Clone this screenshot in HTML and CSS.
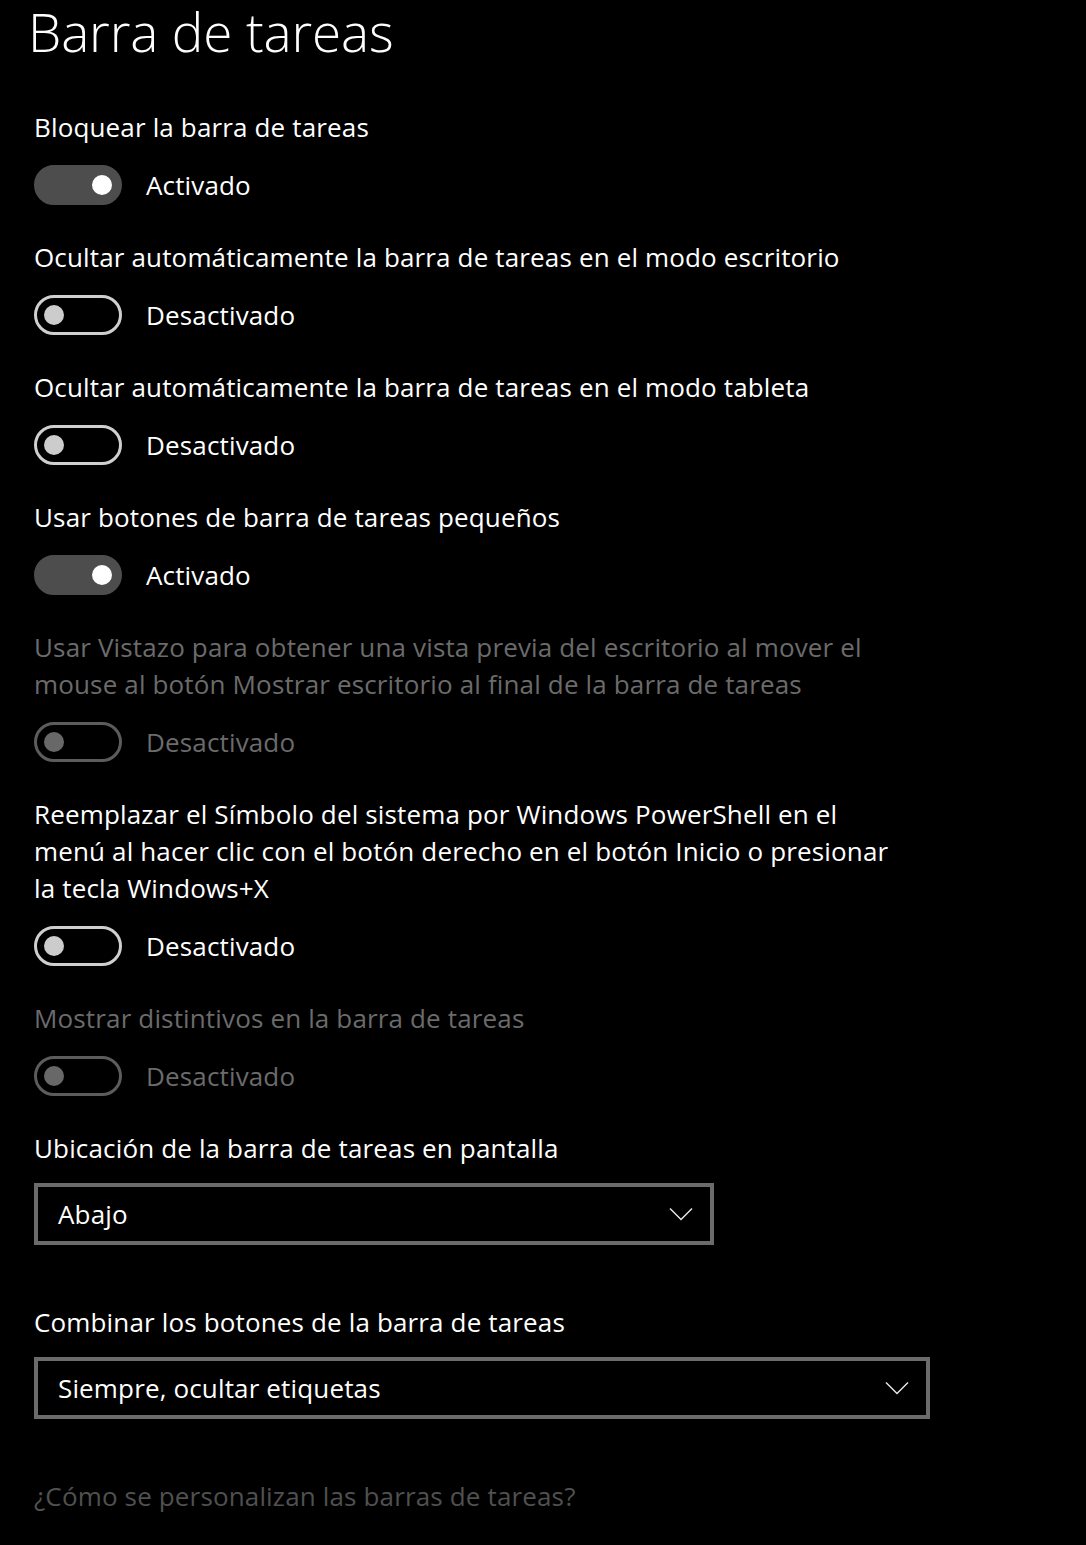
FILE: index.html
```html
<!DOCTYPE html>
<html lang="es">
<head>
<meta charset="utf-8">
<title>Barra de tareas</title>
<link rel="stylesheet" href="styles.css">
</head>
<body>
<main class="page">
  <h1 class="title">Barra de tareas</h1>

  <section class="setting">
    <div class="label">Bloquear la barra de tareas</div>
    <div class="toggle-row">
      <span class="toggle on"><span class="knob"></span></span>
      <span class="state">Activado</span>
    </div>
  </section>

  <section class="setting">
    <div class="label">Ocultar automáticamente la barra de tareas en el modo escritorio</div>
    <div class="toggle-row">
      <span class="toggle"><span class="knob"></span></span>
      <span class="state">Desactivado</span>
    </div>
  </section>

  <section class="setting">
    <div class="label">Ocultar automáticamente la barra de tareas en el modo tableta</div>
    <div class="toggle-row">
      <span class="toggle"><span class="knob"></span></span>
      <span class="state">Desactivado</span>
    </div>
  </section>

  <section class="setting">
    <div class="label">Usar botones de barra de tareas pequeños</div>
    <div class="toggle-row">
      <span class="toggle on"><span class="knob"></span></span>
      <span class="state">Activado</span>
    </div>
  </section>

  <section class="setting disabled">
    <div class="label">Usar Vistazo para obtener una vista previa del escritorio al mover el<br>mouse al botón Mostrar escritorio al final de la barra de tareas</div>
    <div class="toggle-row">
      <span class="toggle"><span class="knob"></span></span>
      <span class="state">Desactivado</span>
    </div>
  </section>

  <section class="setting">
    <div class="label">Reemplazar el Símbolo del sistema por Windows PowerShell en el<br>menú al hacer clic con el botón derecho en el botón Inicio o presionar<br>la tecla Windows+X</div>
    <div class="toggle-row">
      <span class="toggle"><span class="knob"></span></span>
      <span class="state">Desactivado</span>
    </div>
  </section>

  <section class="setting disabled">
    <div class="label">Mostrar distintivos en la barra de tareas</div>
    <div class="toggle-row">
      <span class="toggle"><span class="knob"></span></span>
      <span class="state">Desactivado</span>
    </div>
  </section>

  <section class="setting select-setting">
    <div class="label">Ubicación de la barra de tareas en pantalla</div>
    <div class="select narrow">
      <span class="select-value">Abajo</span>
      <svg class="chevron" width="24" height="14" viewBox="0 0 24 14"><path d="M1 1.5 L12 12.5 L23 1.5" fill="none" stroke="#e6e6e6" stroke-width="1.5"/></svg>
    </div>
  </section>

  <section class="setting select-setting">
    <div class="label">Combinar los botones de la barra de tareas</div>
    <div class="select wide">
      <span class="select-value">Siempre, ocultar etiquetas</span>
      <svg class="chevron" width="24" height="14" viewBox="0 0 24 14"><path d="M1 1.5 L12 12.5 L23 1.5" fill="none" stroke="#e6e6e6" stroke-width="1.5"/></svg>
    </div>
  </section>

  <a class="help-link" href="#">¿Cómo se personalizan las barras de tareas?</a>
</main>
</body>
</html>
```

FILE: styles.css
```css
html, body {
  margin: 0;
  padding: 0;
  background: #000;
}

body {
  font-family: "Open Sans", "Noto Sans", "Liberation Sans", sans-serif;
  color: #fff;
  font-size: 26px;
  letter-spacing: 0.15px;
}

.page {
  display: flex;
  flex-direction: column;
  align-items: flex-start;
  padding-left: 34px;
  width: 1052px;
  min-height: 1545px;
}

.title {
  margin: 0 0 45px -6px;
  font-size: 53px;
  font-weight: 300;
  line-height: 64px;
  letter-spacing: -0.1px;
}

.setting {
  display: flex;
  flex-direction: column;
  align-items: flex-start;
  margin-bottom: 34px;
}

.label {
  line-height: 37px;
  white-space: nowrap;
}

.toggle-row {
  display: flex;
  align-items: center;
  margin-top: 19px;
  height: 40px;
}

.toggle {
  box-sizing: border-box;
  width: 88px;
  height: 40px;
  border-radius: 20px;
  border: 3px solid #cfcfcf;
  display: flex;
  align-items: center;
  padding: 0 7px;
}

.knob {
  width: 20px;
  height: 20px;
  border-radius: 50%;
  background: #cccccc;
}

.toggle.on {
  background: #4d4d4d;
  border-color: #4d4d4d;
  justify-content: flex-end;
}

.toggle.on .knob {
  background: #ffffff;
}

.state {
  margin-left: 24px;
  line-height: 37px;
}

.disabled .label,
.disabled .state {
  color: #6b6b6b;
}

.disabled .toggle {
  border-color: #5c5c5c;
}

.disabled .knob {
  background: #686868;
}

.select-setting {
  margin-bottom: 59px;
}

.select {
  box-sizing: border-box;
  margin-top: 16px;
  height: 62px;
  border: 4px solid #6b6b6b;
  display: flex;
  align-items: center;
  justify-content: space-between;
  padding: 0 17px 0 20px;
}

.select.narrow {
  width: 680px;
}

.select.wide {
  width: 896px;
}

.select-value {
  line-height: 37px;
}

.chevron {
  display: block;
}

.help-link {
  line-height: 37px;
  color: #505050;
  text-decoration: none;
}
```
